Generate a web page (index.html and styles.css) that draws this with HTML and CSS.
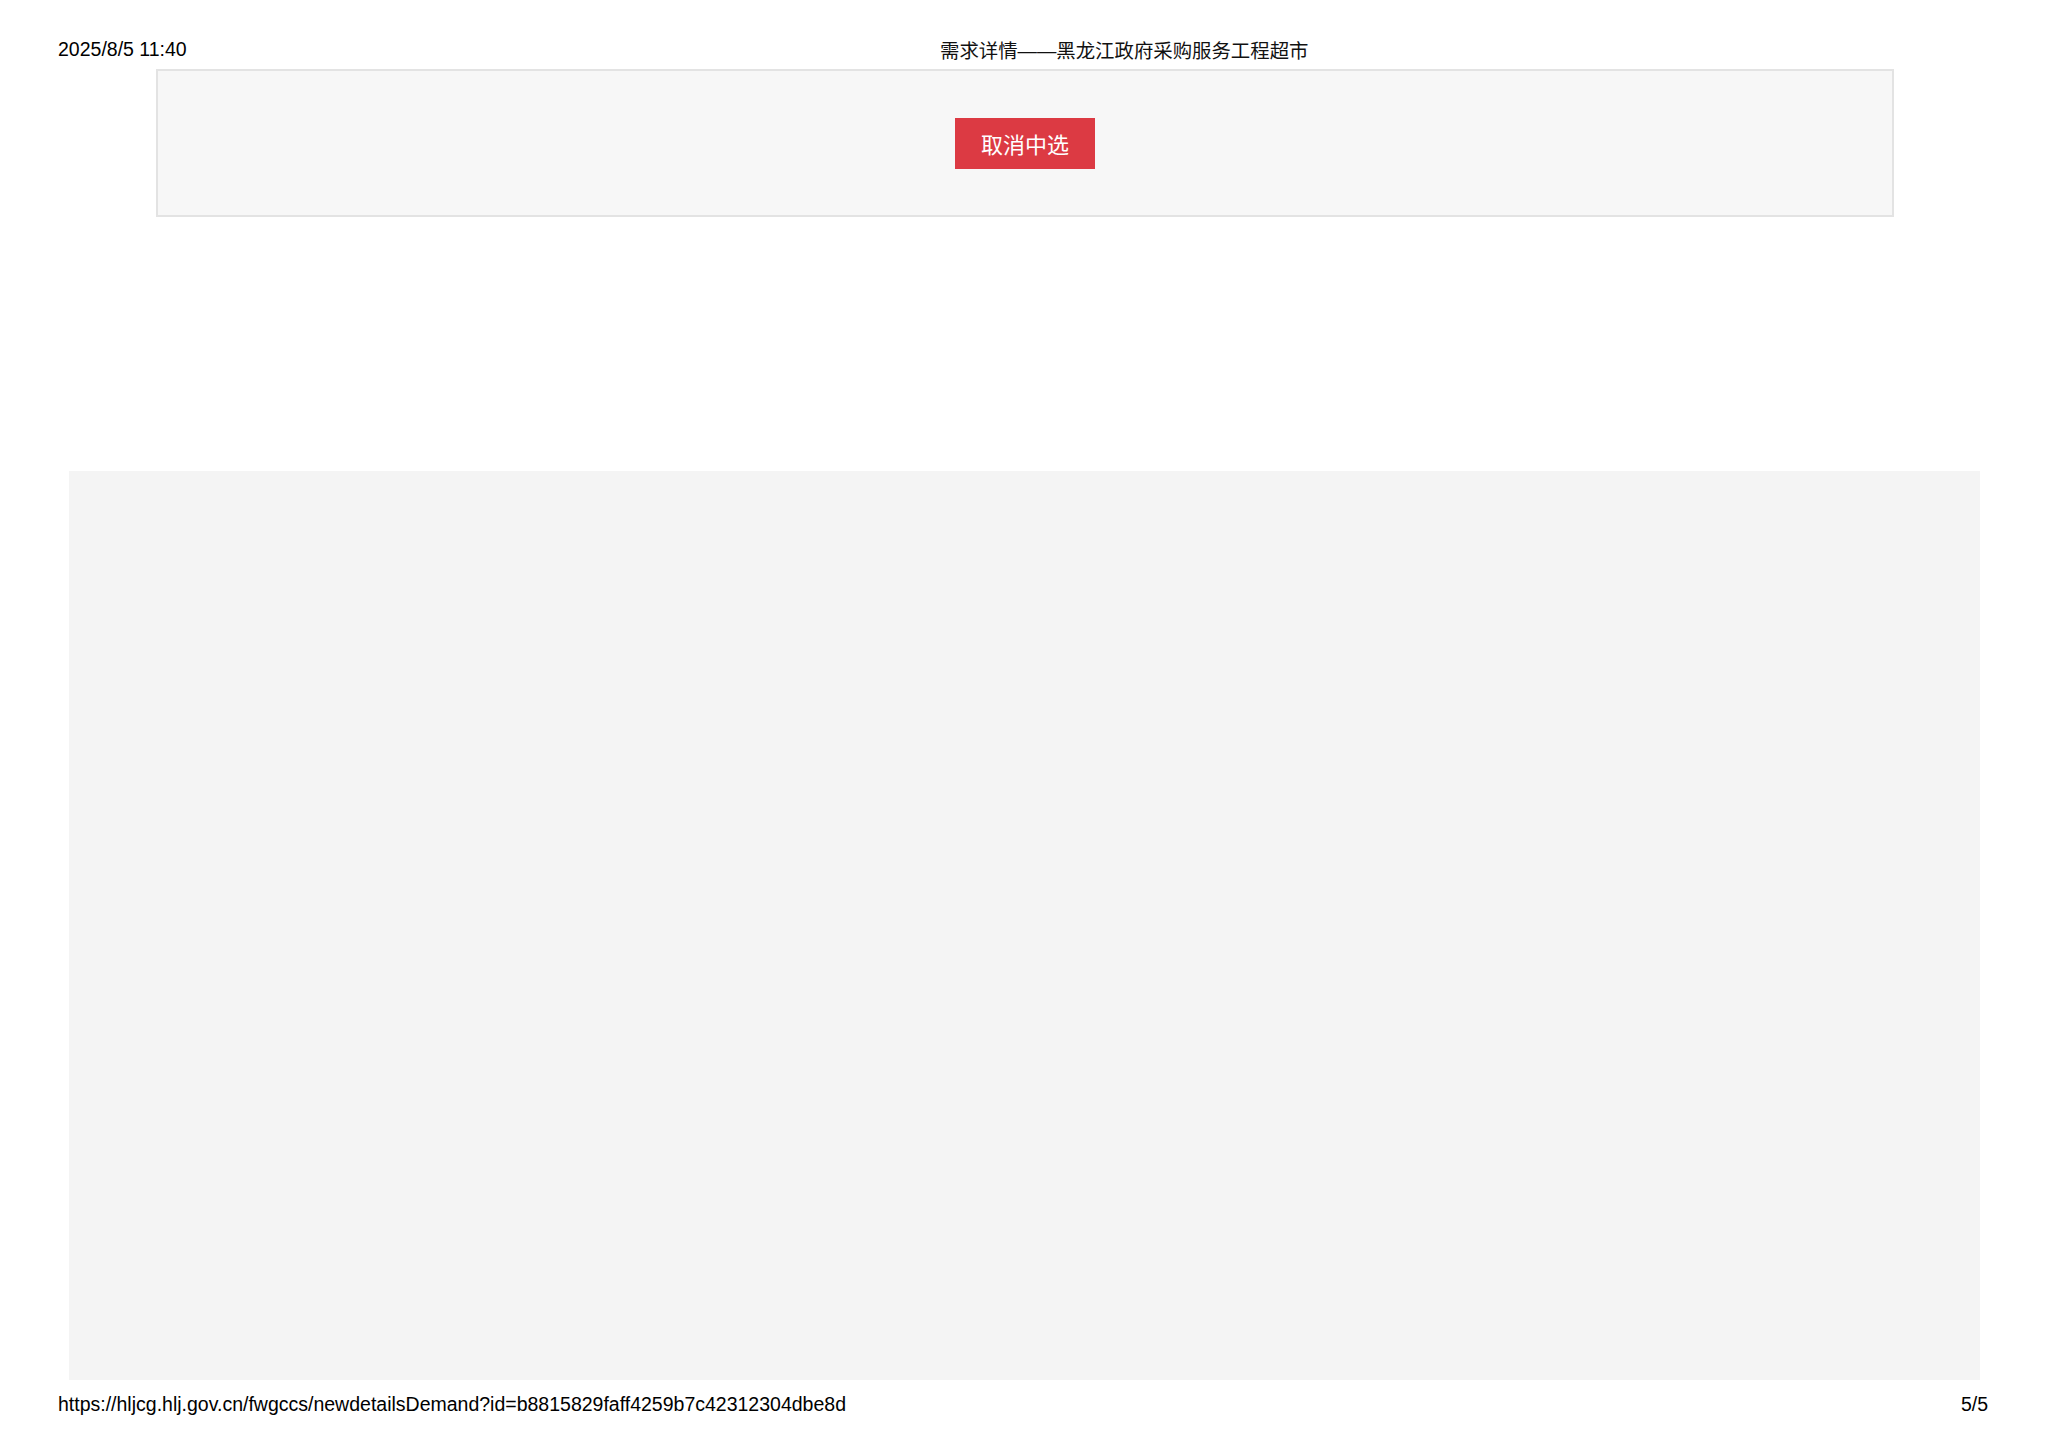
FILE: index.html
```html
<!DOCTYPE html>
<html lang="zh-CN">
<head>
<meta charset="utf-8">
<title>需求详情——黑龙江政府采购服务工程超市</title>
<link rel="stylesheet" href="styles.css">
</head>
<body>
<div class="page">
  <header class="print-head">
    <span class="date">2025/8/5 11:40</span>
    <span class="title">需求详情——黑龙江政府采购服务工程超市</span>
  </header>
  <section class="action-box">
    <button class="btn-cancel" type="button">取消中选</button>
  </section>
  <div class="spacer"></div>
  <div class="grey-area"></div>
  <footer class="print-foot">
    <span class="url">https://hljcg.hlj.gov.cn/fwgccs/newdetailsDemand?id=b8815829faff4259b7c42312304dbe8d</span>
    <span class="pages">5/5</span>
  </footer>
</div>
</body>
</html>
```
FILE: styles.css
```css
html, body {
  margin: 0;
  padding: 0;
  background: #ffffff;
}
body {
  font-family: "Liberation Sans", "Noto Sans CJK SC", Arial, sans-serif;
  color: #000;
}
.page {
  width: 2048px;
  height: 1447px;
  display: flex;
  flex-direction: column;
}
.print-head {
  display: flex;
  align-items: flex-start;
  height: 69px;
  box-sizing: border-box;
  padding: 38px 0 0 58px;
  font-size: 19.5px;
  line-height: 22px;
}
.date {
  width: 882px;
  flex: none;
}
.title {
  font-size: 19.4px;
  color: #111;
  margin-top: 2px;
}
.action-box {
  margin-left: 156px;
  width: 1738px;
  height: 148px;
  box-sizing: border-box;
  border: 2px solid #e3e3e3;
  background: #f7f7f7;
  display: flex;
  justify-content: center;
  padding-top: 47px;
}
.btn-cancel {
  width: 140px;
  height: 51px;
  border: none;
  margin: 0;
  padding: 0;
  background: #dc3a43;
  color: #fff;
  font-family: "Noto Sans CJK SC", sans-serif;
  font-size: 22px;
  line-height: 51px;
  cursor: pointer;
}
.spacer {
  height: 254px;
}
.grey-area {
  margin-left: 69px;
  width: 1911px;
  height: 909px;
  background: #f4f4f4;
}
.print-foot {
  display: flex;
  justify-content: space-between;
  align-items: baseline;
  margin-top: 13px;
  padding: 0 60px 0 58px;
  font-size: 19.5px;
  line-height: 22px;
}
```
